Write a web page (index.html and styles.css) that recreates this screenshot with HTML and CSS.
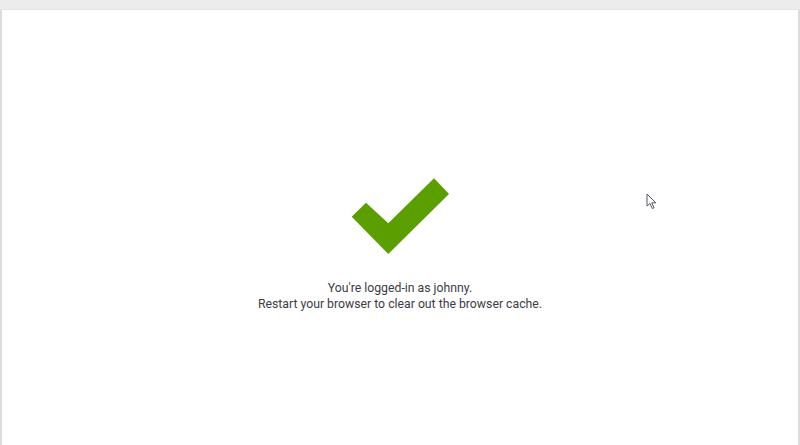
FILE: index.html
```html
<!DOCTYPE html>
<html lang="en">
<head>
<meta charset="utf-8">
<title>Logged in</title>
<link rel="stylesheet" href="styles.css">
</head>
<body>
<div class="topbar"></div>
<main class="frame">
  <div class="content">
    <svg class="check" width="100" height="78" viewBox="0 0 100 78" aria-hidden="true">
      <polygon points="0.7,38.7 15,24.7 37.3,45.3 83,0.3 98,16 37.3,76" fill="#5b9e00"/>
    </svg>
    <p class="message">You're logged-in as johnny.<br>Restart your browser to clear out the browser cache.</p>
  </div>
  <svg class="cursor" width="12" height="18" viewBox="0 0 12 18" aria-hidden="true">
    <path d="M1 1 L1 13 L4 10.5 L6.3 15.5 L8 14.7 L5.8 9.8 L9.8 9.8 Z" fill="#fff" stroke="#55555f" stroke-width="1" stroke-linejoin="round"/>
  </svg>
</main>
</body>
</html>
```
FILE: styles.css
```css
html, body {
  margin: 0;
  padding: 0;
  height: 100%;
  background: #ffffff;
}
body {
  display: flex;
  flex-direction: column;
  font-family: Roboto, Inter, "Liberation Sans", sans-serif;
}
.topbar {
  height: 9px;
  background: #ececec;
  border-bottom: 1px solid #e4e4e4;
  flex: none;
}
.frame {
  position: relative;
  flex: 1;
  border-left: 2px solid #dcdcdc;
  border-right: 2px solid #dcdcdc;
  display: flex;
  justify-content: center;
}
.content {
  display: flex;
  flex-direction: column;
  align-items: center;
  padding-top: 168px;
}
.check {
  display: block;
  margin-left: 2px;
}
.message {
  margin: 24px 0 0;
  text-align: center;
  font-size: 12.25px;
  line-height: 16px;
  color: #3c3c46;
}
.cursor {
  position: absolute;
  left: 644px;
  top: 183px;
}
```
